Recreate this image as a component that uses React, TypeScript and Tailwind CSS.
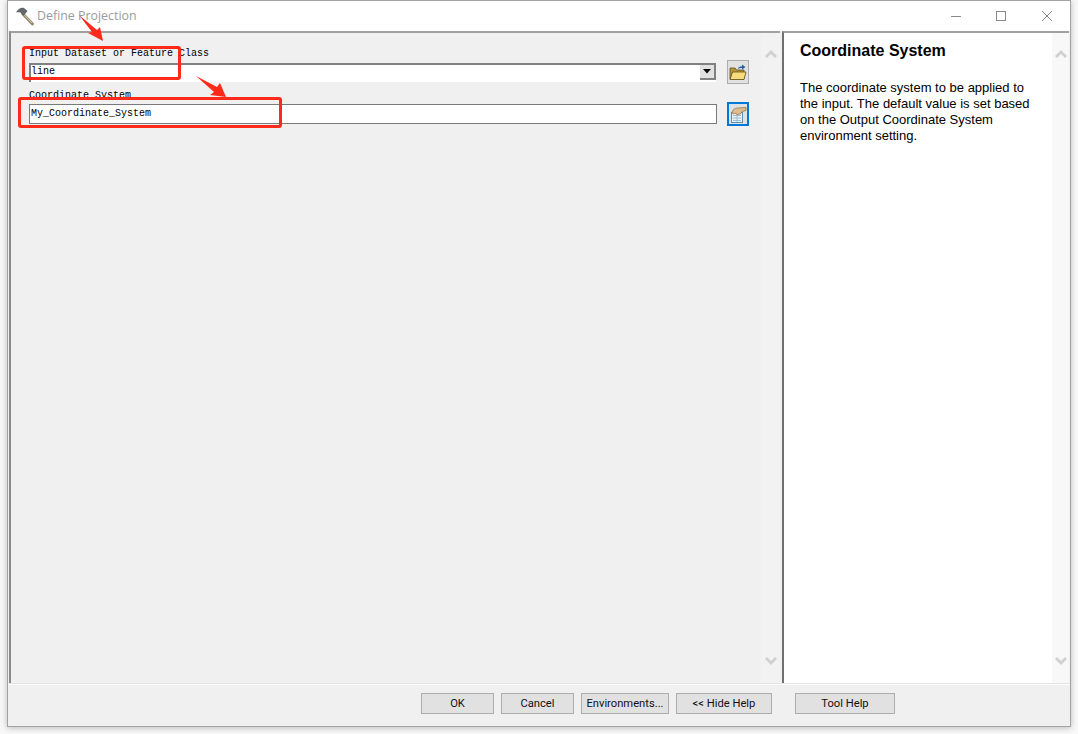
export default function App() {
  const mono = "font-['Liberation_Mono',monospace] text-[10px] leading-[12px] text-black";
  const btn = "h-[21px] pt-px bg-[#e1e1e1] border border-[#adadad] text-[11.2px] text-[#111] font-['Roboto',sans-serif] flex items-center justify-center";
  return (
    <div className="relative w-[1078px] h-[734px] bg-[#f8f8f8] overflow-hidden">
      <div className="ml-[7px] w-[1064px] h-[727px] flex flex-col bg-[#f0f0f0] border border-[#a3a3a3] shadow-[0_1px_6px_rgba(0,0,0,0.25)]">
        {/* title bar */}
        <div className="h-[30px] shrink-0 bg-white flex items-center pl-[7px]">
          <svg width="20" height="20" viewBox="0 0 20 20" className="mr-[2px]">
            <path d="M7.5 7.5 L17.5 18" stroke="#8f8468" strokeWidth="2.8" strokeLinecap="round" />
            <path d="M8.5 8 L17 17.2" stroke="#d8cfb4" strokeWidth="1" />
            <path d="M1 6.5 C3 3 6 1 9 2 L12.5 5 L8.5 10 L5.5 6.5 C4 6 2.5 6 1 6.5 Z" fill="#63666a" />
          </svg>
          <span className="font-['Open_Sans',sans-serif] text-[12.4px] text-[#9b9b9b]">Define Projection</span>
          <div className="ml-auto flex items-center">
            <svg width="12" height="12" viewBox="0 0 12 12" className="mr-[33px]"><path d="M1 6.5H11" stroke="#8a8a8a" /></svg>
            <svg width="12" height="12" viewBox="0 0 12 12" className="mr-[34px]"><rect x="1.5" y="1.5" width="9" height="9" fill="none" stroke="#8a8a8a" /></svg>
            <svg width="12" height="12" viewBox="0 0 12 12" className="mr-[17px]"><path d="M1 1L11 11M11 1L1 11" stroke="#8a8a8a" /></svg>
          </div>
        </div>
        {/* panes */}
        <div className="flex-1 flex min-h-0 pl-px pr-px">
          <div className="w-[771px] flex border-t-2 border-l-2 border-t-[#a0a0a0] border-l-[#8a8a8a]">
            <div className="flex-1 pl-[18px] pt-[15px]">
              <div className={mono}>Input Dataset or Feature Class</div>
              <div className="flex items-center">
                <div className="w-[687px] h-[19px] bg-white border-t-2 border-l-2 border-t-[#808080] border-l-[#808080] flex items-start justify-between">
                  <span className={`${mono} mt-px`}>line</span>
                  <div className="w-[16px] h-[15px] bg-[#e1e1e1] border-r-2 border-b-2 border-r-[#808080] border-b-[#808080] flex items-center justify-center">
                    <svg width="8" height="5" viewBox="0 0 8 5"><path d="M0 0H8L4 4.5Z" fill="#000" /></svg>
                  </div>
                </div>
                <div className="ml-[11px] w-[22px] h-[24px] bg-[#e1e1e1] border border-[#adadad] flex items-center justify-center">
                  <svg width="18" height="17" viewBox="0 0 18 17">
                    <path d="M1 4H6L7.5 6H15V15H1Z" fill="#b8963a" stroke="#5f4f1a" strokeWidth="0.8" />
                    <path d="M1 15.5L3.5 8H17L15 15.5Z" fill="#f7dc7a" stroke="#5f4f1a" strokeWidth="0.8" />
                    <path d="M9 5C9 3 11 2.5 13 2.5V0.5L16.5 3L13 5.5V4C11.5 4 10 4.2 9 5Z" fill="#1f5fa8" />
                  </svg>
                </div>
              </div>
              <div className={`${mono} mt-[6px]`}>Coordinate System</div>
              <div className="flex items-center">
                <div className="w-[688px] h-[20px] bg-white border border-[#7a7a7a] flex items-center pl-[1px]">
                  <span className={mono}>My_Coordinate_System</span>
                </div>
                <div className="ml-[10px] w-[22px] h-[24px] bg-[#e1e1e1] border-2 border-[#0078d7] flex items-center justify-center">
                  <svg width="17" height="17" viewBox="0 0 17 17">
                    <rect x="1.5" y="6.5" width="11" height="10" fill="#e4f0f8" stroke="#5f8fb0" />
                    <path d="M3 9.5H11M3 12H11M3 14.5H11M7 7V16" stroke="#8fb4cc" strokeWidth="0.8" />
                    <path d="M2 6C3 3.5 5 2 7.5 2L16 1.5V4.5L12 5.5L10.5 8L7 8.5L5 7L3 8Z" fill="#e0bc8c" stroke="#7a5c38" strokeWidth="0.6" />
                  </svg>
                </div>
              </div>
            </div>
            <div className="w-[19px] bg-[#f2f2f2] flex flex-col items-center justify-between pt-[17px] pb-[18px]">
              <svg width="12" height="8" viewBox="0 0 12 8"><path d="M1 7L6 2L11 7" fill="none" stroke="#d0d0d0" strokeWidth="2.8" /></svg>
              <svg width="12" height="8" viewBox="0 0 12 8"><path d="M1 1L6 6L11 1" fill="none" stroke="#d0d0d0" strokeWidth="2.8" /></svg>
            </div>
          </div>
          <div className="ml-[2px] flex-1 flex bg-white border-t-2 border-l-2 border-t-[#a0a0a0] border-l-[#707070]">
            <div className="flex-1 pl-[16px] pt-[8px] font-['Liberation_Sans',sans-serif] text-black">
              <div className="text-[16px] leading-[20px] font-bold">Coordinate System</div>
              <div className="mt-[19px] text-[13px] leading-[16px] w-[235px]">
                The coordinate system to be applied to the input. The default value is set based on the Output Coordinate System environment setting.
              </div>
            </div>
            <div className="w-[17px] bg-[#f8f8f8] flex flex-col items-center justify-between pt-[17px] pb-[18px]">
              <svg width="12" height="8" viewBox="0 0 12 8"><path d="M1 7L6 2L11 7" fill="none" stroke="#d0d0d0" strokeWidth="2.8" /></svg>
              <svg width="12" height="8" viewBox="0 0 12 8"><path d="M1 1L6 6L11 1" fill="none" stroke="#d0d0d0" strokeWidth="2.8" /></svg>
            </div>
          </div>
        </div>
        {/* footer */}
        <div className="h-[43px] shrink-0 border-t border-t-[#e3e3e3] shadow-[inset_0_1px_0_#ffffff] flex items-start pt-[9px] pl-[413px]">
          <div className={`${btn} w-[73px]`}>OK</div>
          <div className={`${btn} w-[73px] ml-[7px]`}>Cancel</div>
          <div className={`${btn} w-[88px] ml-[7px]`}>Environments...</div>
          <div className={`${btn} w-[96px] ml-[7px]`}>&lt;&lt; Hide Help</div>
          <div className={`${btn} w-[100px] ml-[23px]`}>Tool Help</div>
        </div>
      </div>
      {/* annotations */}
      <div className="absolute left-[22px] top-[46px] w-[159px] h-[34px] border-[3px] border-[#ff2a1a] rounded-[3px]" />
      <div className="absolute left-[18px] top-[97px] w-[264px] h-[31px] border-[3px] border-[#ff2a1a] rounded-[3px]" />
      <svg className="absolute left-0 top-0" width="240" height="110" viewBox="0 0 240 110">
        <polygon points="79,15 97,30 100,27 103,41 88,33 92,32" fill="#ff2a1a" />
        <polygon points="196,76 217,87 220,83 226,97 210,95 214,92" fill="#ff2a1a" />
      </svg>
    </div>
  );
}
